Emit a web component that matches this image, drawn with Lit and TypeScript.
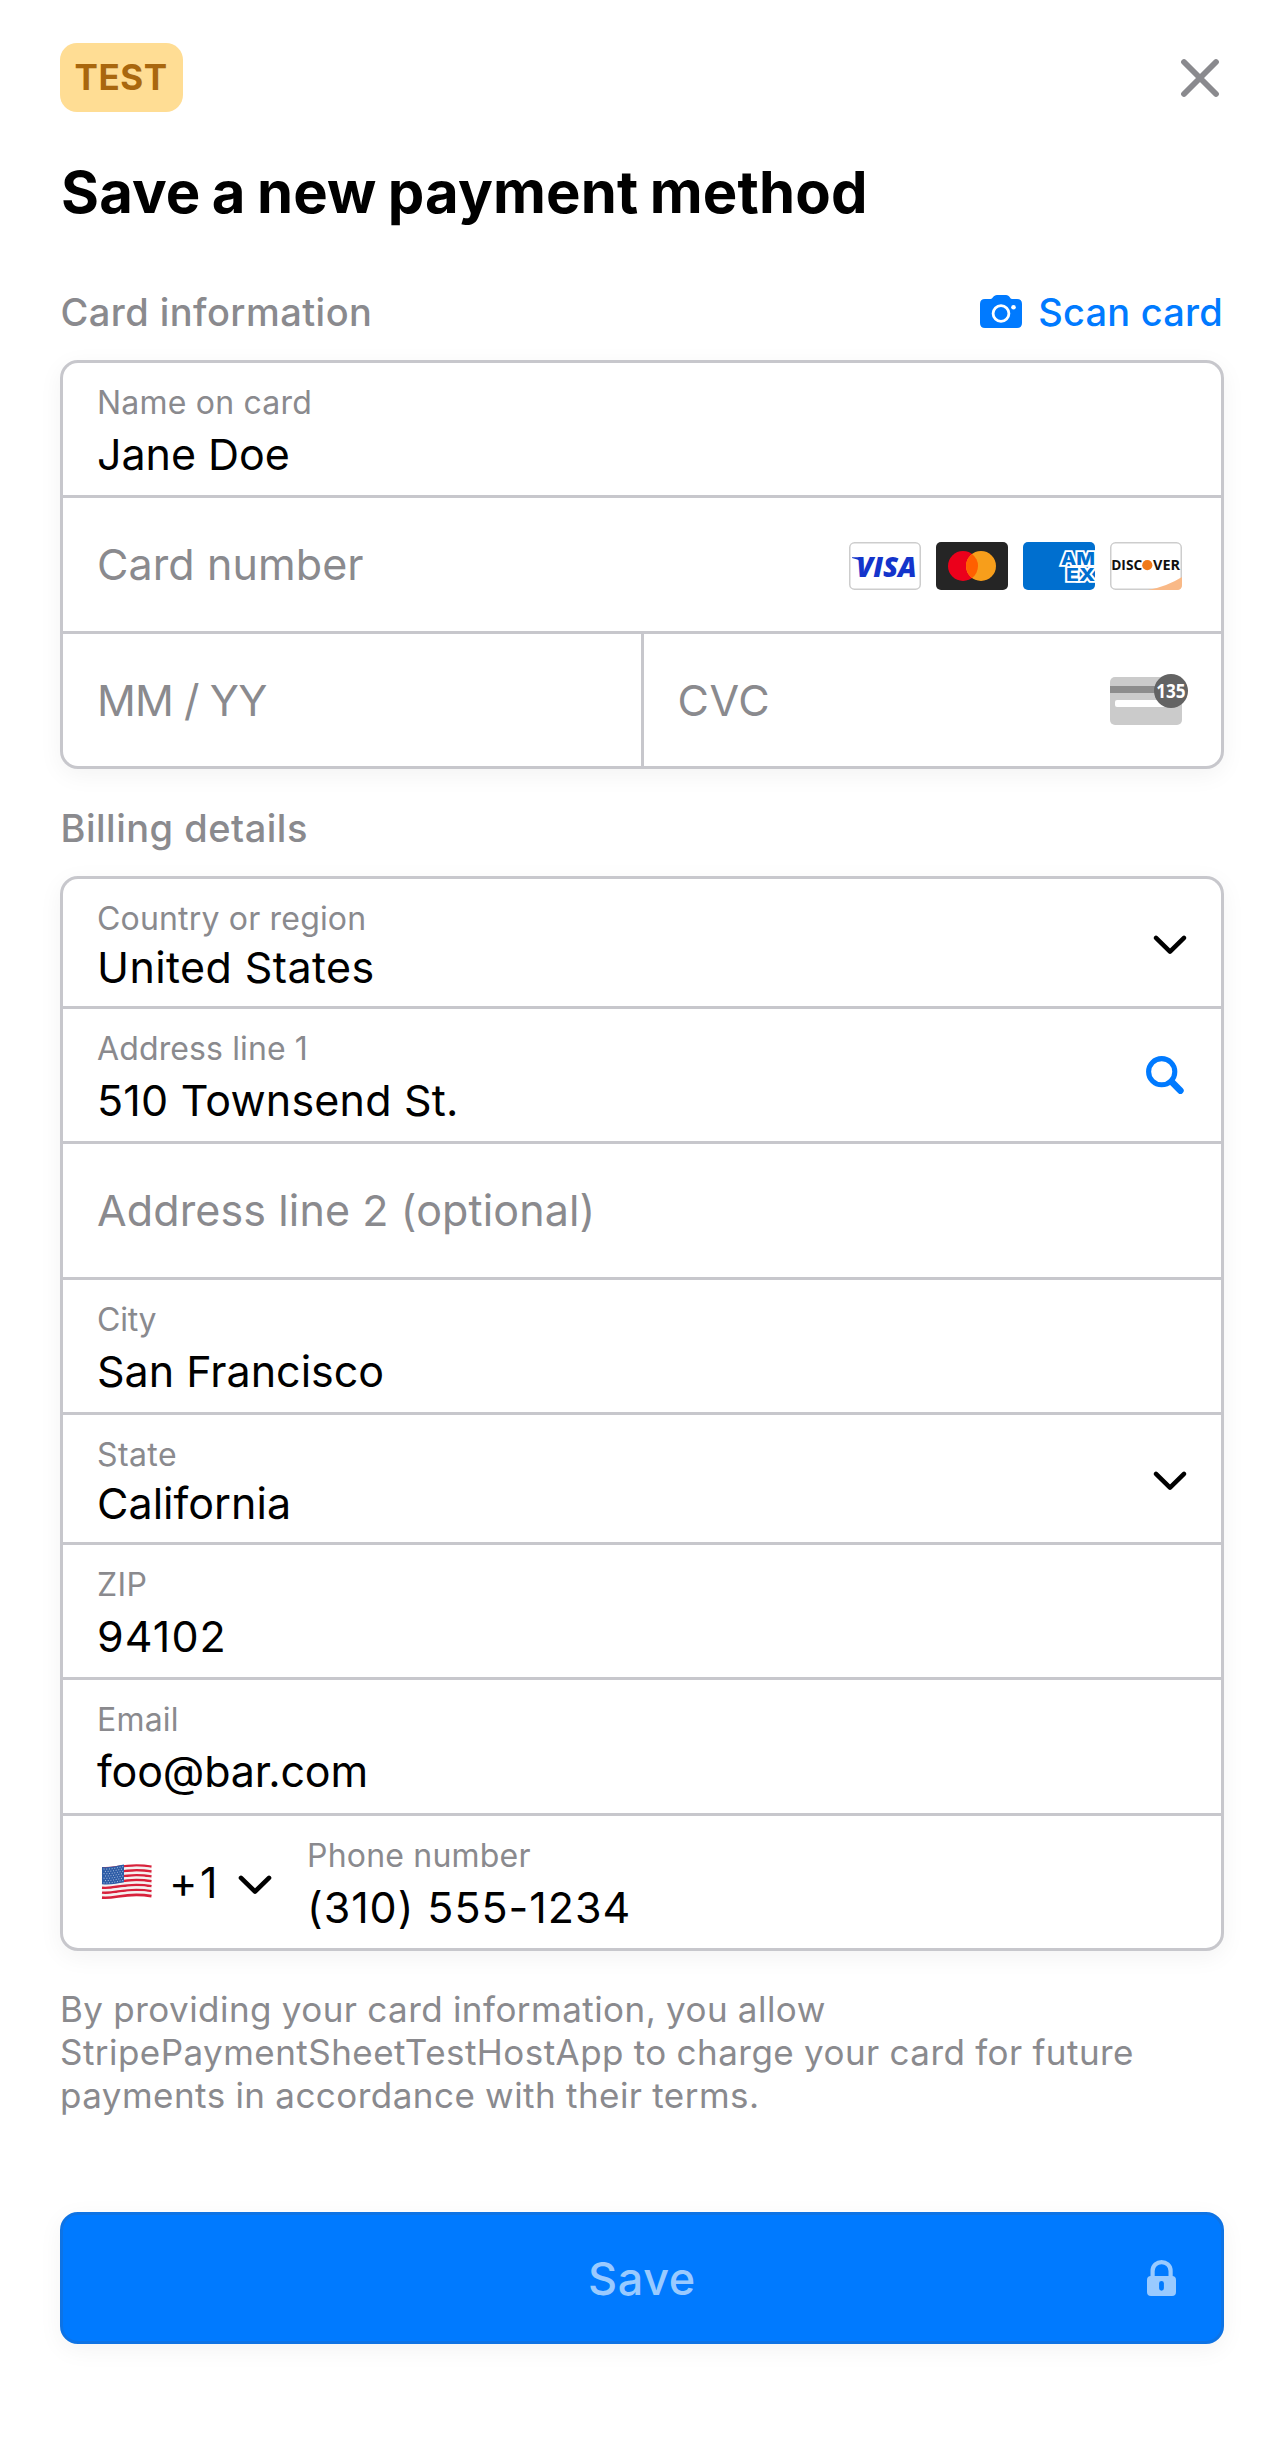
import { LitElement, html, css, svg, nothing } from "lit";
import { customElement, property } from "lit/decorators.js";

const chevron = html`<svg class="chevron" width="34" height="20" viewBox="0 0 34 20" fill="none">
  <path d="M3 2.9 L17 16.6 L31 2.9" stroke="#000" stroke-width="4.6" stroke-linecap="round" stroke-linejoin="round" />
</svg>`;

const searchIcon = html`<svg class="search" width="38" height="38" viewBox="0 0 38 38" fill="none" stroke="#007aff">
  <circle cx="15.7" cy="15.7" r="13.1" stroke-width="5.1" />
  <path d="M25.5 25.7 L34.4 34.6" stroke-width="6.6" stroke-linecap="round" />
</svg>`;

const cameraIcon = html`<svg width="42" height="33" viewBox="0 0 42 33">
  <path d="M5 4 H10.5 C12.8 4 13.2 0 17 0 H26 C29.8 0 29.8 4 32 4 H37 Q42 4 42 9 V28 Q42 33 37 33 H5 Q0 33 0 28 V9 Q0 4 5 4 Z" fill="#007aff" />
  <circle cx="21" cy="18.5" r="7.9" fill="none" stroke="#fff" stroke-width="2.8" />
  <circle cx="33.5" cy="12.3" r="2.3" fill="#fff" />
</svg>`;

const closeIcon = html`<svg width="38" height="38" viewBox="0 0 38 38" fill="none">
  <path d="M3 3 L35 35 M35 3 L3 35" stroke="#8a8a8e" stroke-width="5.8" stroke-linecap="round" />
</svg>`;

const lockIcon = html`<svg width="29" height="36" viewBox="0 0 29 36">
  <path d="M5.6 17 V11 C5.6 -0.9 23.6 -0.9 23.6 11 V17" fill="none" stroke="#99caff" stroke-width="4.2" />
  <path fill-rule="evenodd" fill="#99caff" d="M4 16 H25 Q29 16 29 20 V32 Q29 36 25 36 H4 Q0 36 0 32 V20 Q0 16 4 16 Z M12.1 23.3 V28.3 A2.4 2.4 0 0 0 16.9 28.3 V23.3 A2.4 2.4 0 0 0 12.1 23.3 Z" />
</svg>`;

const visa = html`<svg width="72" height="48" viewBox="0 0 72 48">
  <rect x="0.75" y="0.75" width="70.5" height="46.5" rx="4.8" fill="#fff" stroke="#cdcdcd" stroke-width="1.5" />
  <path d="M3 15.2 H11 L13 20 Q8.5 16.6 3 15.9 Z" fill="#1434cb" />
  <text class="visa" x="7.2" y="34.6" textLength="60.5" lengthAdjust="spacingAndGlyphs">VISA</text>
</svg>`;

const mastercard = html`<svg width="72" height="48" viewBox="0 0 72 48">
  <rect width="72" height="48" rx="5" fill="#252525" />
  <circle cx="27" cy="24" r="15" fill="#eb001b" />
  <circle cx="45" cy="24" r="15" fill="#f79e1b" />
  <path d="M36 12 A15 15 0 0 1 36 36 A15 15 0 0 1 36 12 Z" fill="#ff5f00" />
</svg>`;

const amex = html`<svg width="72" height="48" viewBox="0 0 72 48">
  <rect width="72" height="48" rx="5" fill="#006fcf" />
  <text class="amex" x="38" y="22.7" textLength="34" lengthAdjust="spacingAndGlyphs">AM</text>
  <text class="amex" x="43" y="39" textLength="29" lengthAdjust="spacingAndGlyphs">EX</text>
</svg>`;

const discover = html`<svg width="72" height="48" viewBox="0 0 72 48">
  <rect x="0.75" y="0.75" width="70.5" height="46.5" rx="4.8" fill="#fff" stroke="#cdcdcd" stroke-width="1.5" />
  <path d="M38 48 Q57 44.5 72 35 V43 Q72 48 67 48 Z" fill="#f9b987" />
  <text class="discover" x="1.2" y="28" textLength="31" lengthAdjust="spacingAndGlyphs">DISC</text>
  <circle cx="37.3" cy="23.2" r="5.1" fill="#ef7a1c" />
  <text class="discover" x="43" y="28" textLength="27" lengthAdjust="spacingAndGlyphs">VER</text>
</svg>`;

const cvcIcon = html`<svg width="78" height="51" viewBox="0 0 78 51">
  <rect y="3" width="72" height="48" rx="5" fill="#cbcbcb" />
  <rect y="12" width="72" height="7" fill="#8d8d8d" />
  <rect x="5" y="26" width="56" height="7" rx="2" fill="#fff" />
  <circle cx="61" cy="17" r="17" fill="#636363" />
  <text class="cvc" x="46.2" y="24" textLength="29.4" lengthAdjust="spacingAndGlyphs">135</text>
</svg>`;

const wave = (y: number) => `M0 ${y} C14 ${y + 1.5} 24 ${y - 6} 49.5 ${y - 1.5}`;
const flag = html`<svg class="flag" width="50" height="36" viewBox="0 0 50 36" fill="none">
  ${Array.from({ length: 13 }, (_, i) => svg`<path d=${wave(4.2 + i * 2.45)} stroke=${i % 2 ? "#f4f1f1" : "#d8213b"} stroke-width="2.6" />`)}
  <path d="M0 3 C9 4 15 1.6 22 0.6 V18.2 C15 19.4 9 21 0 20.2 Z" fill="#2d5ca6" />
  ${Array.from({ length: 7 }, (_, i) => svg`<path d="M1.5 ${5 + i * 2.3} C9 ${5.6 + i * 2.3} 15 ${3.6 + i * 2.3} 21.5 ${2.6 + i * 2.3}" stroke="#b9cae6" stroke-width="0.9" stroke-dasharray="1 1.7" stroke-dashoffset=${i % 2 ? 1.3 : 0} />`)}
</svg>`;

/** One cell of a form group: a floating label over a value, or a lone placeholder. */
@customElement("form-field")
export class FormField extends LitElement {
  static styles = css`
    :host { display: flex; flex: 1; min-width: 0; align-items: flex-start; box-sizing: border-box; padding-right: 34px; }
    .text { flex: 1; min-width: 0; padding: 20px 0 0 34px; }
    .label { font-size: 32px; line-height: 39px; color: #8a8a8e; white-space: nowrap; }
    .value { font-size: 43px; line-height: 52px; margin-top: 6px; color: #000; white-space: nowrap; }
    :host([picker]) .value { margin-top: 3px; }
    .placeholder { font-size: 43px; line-height: 52px; padding-top: 20px; color: #8a8a8e; white-space: nowrap; }
  `;
  @property() label = "";
  @property() value = "";
  @property({ type: Number }) labelTrack = 0.2;
  @property({ type: Number }) track = 0.1;

  render() {
    return html`<div class="text">
        ${this.value
          ? html`<div class="label" style="letter-spacing:${this.labelTrack}px">${this.label}</div>
              <div class="value" style="letter-spacing:${this.track}px">${this.value}</div>`
          : html`<div class="placeholder" style="letter-spacing:${this.track}px">${this.label}</div>`}
      </div>
      <slot></slot>`;
  }
}

interface Field {
  label: string;
  value?: string;
  size: "short" | "mid" | "tall";
  labelTrack?: number;
  track?: number;
  picker?: boolean;
  search?: boolean;
}

const billing: Field[] = [
  { label: "Country or region", value: "United States", size: "short", labelTrack: 0.18, track: 0.4, picker: true },
  { label: "Address line 1", value: "510 Townsend St.", size: "mid", labelTrack: 0.12, track: 0.2, search: true },
  { label: "Address line 2 (optional)", size: "tall", track: 0.12 },
  { label: "City", value: "San Francisco", size: "mid", labelTrack: -0.2, track: 0 },
  { label: "State", value: "California", size: "short", labelTrack: 0.4, track: 0.05, picker: true },
  { label: "ZIP", value: "94102", size: "mid", labelTrack: 0.39, track: 1.1 },
  { label: "Email", value: "foo@bar.com", size: "tall", labelTrack: 0.2, track: -0.14 },
];

@customElement("app-root")
export class AppRoot extends LitElement {
  static styles = css`
    :host { display: block; min-height: 2464px; box-sizing: border-box; padding: 43px 60px 0; background: #fff;
      font-family: Inter, "Liberation Sans", sans-serif; }
    svg { display: block; flex: none; overflow: visible; }
    .top { display: flex; justify-content: space-between; align-items: center; height: 69px; padding-right: 5px; }
    .badge { box-sizing: border-box; width: 123px; height: 69px; border-radius: 17px; background: #ffdd94; color: #a9670e;
      font-size: 35px; font-weight: 700; line-height: 42px; letter-spacing: 0.6px; padding: 13px 0 0 14.5px; }
    .title { margin: 45px 0 62px 1px; font-size: 58px; line-height: 70px; font-weight: 700; letter-spacing: 0.15px;
      word-spacing: -2.6px; color: #000; }
    .heading { display: flex; justify-content: space-between; height: 46px; margin-bottom: 25px; padding-left: 0.5px;
      font-size: 38px; line-height: 46px; font-weight: 500; letter-spacing: 0.45px; color: #8a8a8e; }
    .heading.billing { margin-top: 36px; letter-spacing: 0.5px; }
    .scan { display: flex; gap: 16.5px; margin-right: 1px; color: #007aff; letter-spacing: 0.22px; }
    .scan svg { margin-top: 6px; }
    .group { display: flex; flex-direction: column; gap: 3px; background: #c7c7cc; border: 3px solid #c7c7cc;
      border-radius: 18px; overflow: hidden; box-shadow: 0 6px 24px rgba(0, 0, 0, 0.05); }
    .row { display: flex; background: #fff; height: 132px; }
    .row.short { height: 127px; }
    .row.tall { height: 133px; }
    .row.split { gap: 3px; background: #c7c7cc; }
    .row.split form-field { background: #fff; }
    .brands { display: flex; gap: 15px; margin: 44px 5px 0 0; }
    .cvc-icon { margin: 40px -1px 0 0; }
    .chevron { margin-top: 56px; }
    .search { margin: 47px 3px 0 0; }
    .dial { display: flex; width: 210px; }
    .flag { margin: 48px 0 0 39px; }
    .code { margin: 40px 0 0 17px; width: 59px; font-size: 43px; line-height: 52px; letter-spacing: 2.5px; color: #000; }
    .dial .chevron { margin: 59px 0 0 10px; }
    .terms { margin: 37px 0 0; font-size: 35px; line-height: 43px; letter-spacing: 0.46px; word-spacing: -0.5px; color: #8a8a8e; }
    .save { display: grid; grid-template-columns: 1fr auto 1fr; align-items: center; box-sizing: border-box; height: 132px;
      margin-top: 95px; padding: 0 45px; border: 3px solid #0d73e5; border-radius: 18px; background: #007aff;
      box-shadow: 0 6px 24px rgba(0, 0, 0, 0.05); }
    .save-text { grid-column: 2; font-size: 45px; line-height: 55px; font-weight: 500; letter-spacing: 0.6px; color: #99caff; }
    .save svg { justify-self: end; }
    .visa { font: italic 800 27.5px "Open Sans", sans-serif; fill: #1434cb; }
    .amex { font: 800 17.5px Inter, sans-serif; fill: #006fcf; stroke: #fff; stroke-width: 3.6px; paint-order: stroke; }
    .discover { font: 700 14.3px "Open Sans", sans-serif; fill: #111; }
    .cvc { font: 700 19px "Open Sans", sans-serif; fill: #fff; }
  `;

  render() {
    return html`
      <div class="top"><div class="badge">TEST</div>${closeIcon}</div>
      <h1 class="title">Save a new payment method</h1>

      <div class="heading">
        <span>Card information</span>
        <span class="scan">${cameraIcon}<span>Scan card</span></span>
      </div>
      <div class="group">
        <div class="row"><form-field label="Name on card" value="Jane Doe" .track=${-0.05}></form-field></div>
        <div class="row tall">
          <form-field label="Card number"><div class="brands">${visa}${mastercard}${amex}${discover}</div></form-field>
        </div>
        <div class="row split">
          <form-field label="MM / YY" .track=${-0.9}></form-field>
          <form-field label="CVC" .track=${0.6}><div class="cvc-icon">${cvcIcon}</div></form-field>
        </div>
      </div>

      <div class="heading billing"><span>Billing details</span></div>
      <div class="group">
        ${billing.map(
          (f) => html`<div class="row ${f.size}">
            <form-field .label=${f.label} .value=${f.value ?? ""} .labelTrack=${f.labelTrack ?? 0.2} .track=${f.track ?? 0.1} ?picker=${f.picker}>
              ${f.picker ? chevron : f.search ? searchIcon : nothing}
            </form-field>
          </div>`
        )}
        <div class="row">
          <div class="dial">${flag}<span class="code">+1</span>${chevron}</div>
          <form-field label="Phone number" value="(310) 555-1234" .labelTrack=${0.2} .track=${0.95}></form-field>
        </div>
      </div>

      <p class="terms">
        By providing your card information, you allow StripePaymentSheetTestHostApp to charge your card for future payments in
        accordance with their terms.
      </p>
      <div class="save"><span class="save-text">Save</span>${lockIcon}</div>
    `;
  }
}
